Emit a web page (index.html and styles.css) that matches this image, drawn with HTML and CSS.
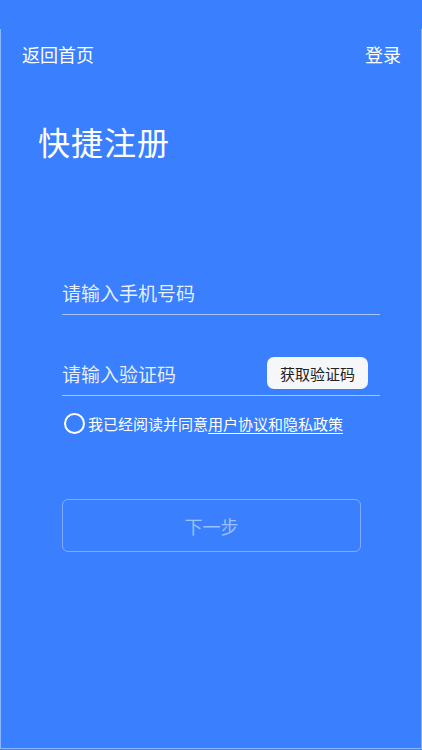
FILE: index.html
```html
<!DOCTYPE html>
<html lang="zh-CN">
<head>
<meta charset="utf-8">
<title>快捷注册</title>
<link rel="stylesheet" href="styles.css">
</head>
<body>
<div class="frame">
  <header class="nav">
    <a class="nav-link" href="#">返回首页</a>
    <a class="nav-link" href="#">登录</a>
  </header>
  <h1 class="title">快捷注册</h1>
  <form class="form">
    <div class="field">
      <input class="input" type="tel" placeholder="请输入手机号码">
    </div>
    <div class="field field-code">
      <input class="input" type="text" placeholder="请输入验证码">
      <button type="button" class="code-btn">获取验证码</button>
    </div>
    <label class="agree">
      <span class="radio"></span>
      <span class="agree-text">我已经阅读并同意<a href="#" class="agree-link">用户协议和隐私政策</a></span>
    </label>
    <button type="button" class="next-btn">下一步</button>
  </form>
</div>
</body>
</html>
```
FILE: styles.css
```css
html, body {
  margin: 0;
  padding: 0;
  background: #3a80fe;
  font-family: "Noto Sans CJK SC", "Noto Sans", sans-serif;
  color: #fff;
}
.frame {
  margin-top: 29px;
  height: 719px;
  border-left: 1px solid #8db5fb;
  border-right: 1px solid #8db5fb;
  border-bottom: 1px solid #8db5fb;
  box-sizing: content-box;
}
.nav {
  height: 50px;
  display: flex;
  align-items: center;
  justify-content: space-between;
  padding: 0 20px 0 21px;
}
.nav-link {
  color: #fff;
  text-decoration: none;
  font-size: 18px;
  line-height: 1;
}
.title {
  margin: 46px 0 0 37px;
  font-size: 32px;
  font-weight: 400;
  line-height: 1;
  letter-spacing: 1px;
}
.form {
  margin: 113px 41px 0 61px;
  display: flex;
  flex-direction: column;
}
.field {
  height: 44px;
  display: flex;
  align-items: center;
  border-bottom: 1px solid rgba(255,255,255,0.55);
}
.field-code {
  margin-top: 36px;
}
.input {
  flex: 1;
  min-width: 0;
  height: 100%;
  border: none;
  outline: none;
  background: transparent;
  padding: 0;
  color: #fff;
  font-family: inherit;
  font-size: 19px;
}
.input::placeholder {
  color: rgba(255,255,255,0.88);
}
.code-btn {
  margin-right: 12px;
  width: 101px;
  height: 32px;
  border: none;
  border-radius: 7px;
  background: #f6f7fa;
  color: #222;
  font-family: inherit;
  font-size: 15px;
  padding: 0;
}
.agree {
  margin-top: 16px;
  display: flex;
  align-items: center;
  height: 22px;
}
.radio {
  width: 17px;
  height: 17px;
  border: 2px solid #fff;
  border-radius: 50%;
  margin-left: 2px;
  margin-right: 3px;
}
.agree-text {
  font-size: 15px;
  line-height: 1;
}
.agree-link {
  color: #fff;
  text-decoration: underline;
  text-underline-offset: 3px;
}
.next-btn {
  margin-top: 65px;
  width: 299px;
  height: 53px;
  border: 1px solid rgba(255,255,255,0.35);
  border-radius: 6px;
  background: transparent;
  color: rgba(255,255,255,0.5);
  font-family: inherit;
  font-size: 18px;
  padding: 0;
}
```
